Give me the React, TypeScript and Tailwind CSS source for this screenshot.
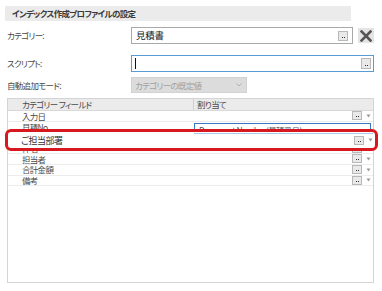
import React from "react";

function Dots({ cls = "" }: { cls?: string }) {
  return (
    <div className={"flex items-end justify-center gap-[1px] pb-[2px] border border-[#b8b8b8] bg-[#e9e9e9] " + cls}>
      <span className="w-[1px] h-[1px] bg-[#333]" />
      <span className="w-[1px] h-[1px] bg-[#333]" />
    </div>
  );
}

function Tri() {
  return (
    <svg width="5" height="4" viewBox="0 0 5 4" className="ml-[4px]">
      <path d="M0.5 0.5 L4.5 0.5 L2.5 3.5 Z" fill="#9a9a9a" />
    </svg>
  );
}

function Row({ label, buttons = true, clip = "", children }: { label: string; buttons?: boolean; clip?: string; children?: React.ReactNode }) {
  return (
    <div className="h-[10.75px] border-b border-[#ececec] flex items-center">
      <div className={"w-[185px] pl-[14px] leading-none whitespace-nowrap " + clip}>
        {label && <span>{label}</span>}
      </div>
      <div className="flex-1 h-full flex items-center justify-end pr-[2px] relative">
        {children}
        {buttons && (
          <>
            <Dots cls="w-[10px] h-[9px]" />
            <Tri />
          </>
        )}
      </div>
    </div>
  );
}

export default function App() {
  return (
    <div className="w-[382px] h-[291px] bg-white pt-[6px] relative overflow-hidden text-[8.5px] tracking-[-0.7px] text-[#4a4a4a] font-['Noto_Sans_CJK_JP',sans-serif] [font-feature-settings:'palt']">
      <div className="ml-[5px] w-[346px] h-[15px] bg-[#ebebeb] pl-[7px] flex items-center font-bold text-[#3a3a3a] leading-none">
        インデックス作成プロファイルの設定
      </div>

      <div className="mt-[6px] h-[17px] flex items-center">
        <div className="w-[131px] pl-[7px] leading-none">カテゴリー:</div>
        <div className="w-[222px] h-[17px] border border-[#a9a9a9] flex items-center justify-between pl-[4px] pr-[4px] text-[9.5px] tracking-[-0.3px] text-[#222] leading-none">
          <span>見積書</span>
          <Dots cls="w-[10px] h-[10px]" />
        </div>
        <div className="ml-[5px] w-[16px] h-[15px] bg-[#e4e4e4] flex items-center justify-center">
          <svg width="12" height="12" viewBox="0 0 12 12">
            <path d="M1.5 1.5 L10.5 10.5 M10.5 1.5 L1.5 10.5" stroke="#555" strokeWidth="2.6" strokeLinecap="square" />
          </svg>
        </div>
      </div>

      <div className="mt-[11px] h-[17px] flex items-center">
        <div className="w-[131px] pl-[7px] leading-none">スクリプト:</div>
        <div className="w-[243px] h-[17px] border border-[#5b9bd5] flex items-center justify-between pl-[3px] pr-[2px]">
          <span className="w-[1px] h-[11px] bg-[#111]" />
          <Dots cls="w-[10px] h-[11px]" />
        </div>
      </div>

      <div className="mt-[5px] h-[16px] flex items-center">
        <div className="w-[131px] pl-[7px] leading-none">自動追加モード:</div>
        <div className="w-[116px] h-[16px] bg-[#dcdcdc] border border-[#d2d2d2] flex items-center justify-between pl-[3px] pr-[4px] text-[#a0a0a0] leading-none">
          <span>カテゴリーの既定値</span>
          <svg width="6" height="4" viewBox="0 0 6 4">
            <path d="M0.5 0.5 L3 3 L5.5 0.5" stroke="#b0b0b0" strokeWidth="1" fill="none" />
          </svg>
        </div>
      </div>

      <div className="mt-[5px] ml-[7px] w-[367px] h-[185px] border border-[#d4d4d4]">
        <div className="h-[12px] bg-[#ebebeb] flex items-center border-b border-[#d8d8d8]">
          <div className="w-[185px] pl-[14px] leading-none">カテゴリー フィールド</div>
          <div className="h-full border-l border-[#cfcfcf] pl-[3px] flex items-center leading-none">割り当て</div>
        </div>
        <Row label="入力日" />
        <Row label="見積No" buttons={false} clip="h-[7px] overflow-hidden self-start pt-[1px]">
          <div className="absolute left-[1px] right-[2px] top-[1px] h-[12px] border border-[#3b78c4] bg-white pl-[4px] overflow-hidden leading-none text-[#555] whitespace-nowrap">
            <div className="pt-[2px]">Document.Number (見積番号)</div>
          </div>
        </Row>
        <Row label="" buttons={false} />
        <Row label="件名" clip="h-[4px] overflow-hidden self-end flex items-end pb-[1px]" />
        <Row label="担当者" />
        <Row label="合計金額" />
        <Row label="備考" />
      </div>

      <div className="absolute left-[5px] top-[129px] w-[373px] h-[22px] border-[3.5px] border-[#d7191f] rounded-[6px] bg-white">
        <div className="absolute left-[186px] right-[2px] top-[1px] h-[1px] bg-[#a8c8ea]" />
        <div className="absolute left-[13px] top-0 h-full flex items-center text-[9px] tracking-[-0.5px] leading-none text-[#333]">ご担当部署</div>
        <div className="absolute right-[2px] top-0 h-full flex items-center">
          <Dots cls="w-[10px] h-[9px]" />
          <Tri />
        </div>
      </div>
    </div>
  );
}
